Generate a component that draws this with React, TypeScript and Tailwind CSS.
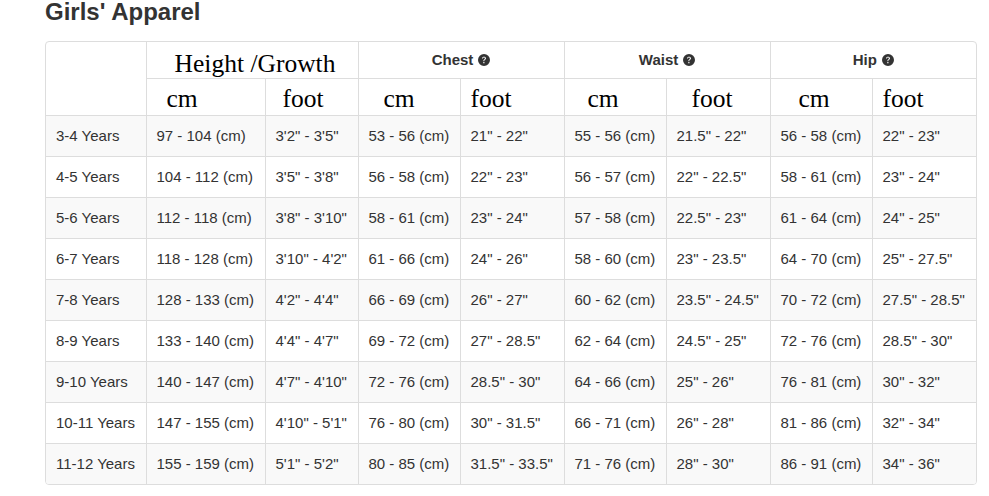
import React from "react";
import { BsQuestionCircleFill } from "react-icons/bs";

const rows: string[][] = [
  ["3-4 Years", "97 - 104 (cm)", "3'2\" - 3'5\"", "53 - 56 (cm)", "21\" - 22\"", "55 - 56 (cm)", "21.5\" - 22\"", "56 - 58 (cm)", "22\" - 23\""],
  ["4-5 Years", "104 - 112 (cm)", "3'5\" - 3'8\"", "56 - 58 (cm)", "22\" - 23\"", "56 - 57 (cm)", "22\" - 22.5\"", "58 - 61 (cm)", "23\" - 24\""],
  ["5-6 Years", "112 - 118 (cm)", "3'8\" - 3'10\"", "58 - 61 (cm)", "23\" - 24\"", "57 - 58 (cm)", "22.5\" - 23\"", "61 - 64 (cm)", "24\" - 25\""],
  ["6-7 Years", "118 - 128 (cm)", "3'10\" - 4'2\"", "61 - 66 (cm)", "24\" - 26\"", "58 - 60 (cm)", "23\" - 23.5\"", "64 - 70 (cm)", "25\" - 27.5\""],
  ["7-8 Years", "128 - 133 (cm)", "4'2\" - 4'4\"", "66 - 69 (cm)", "26\" - 27\"", "60 - 62 (cm)", "23.5\" - 24.5\"", "70 - 72 (cm)", "27.5\" - 28.5\""],
  ["8-9 Years", "133 - 140 (cm)", "4'4\" - 4'7\"", "69 - 72 (cm)", "27\" - 28.5\"", "62 - 64 (cm)", "24.5\" - 25\"", "72 - 76 (cm)", "28.5\" - 30\""],
  ["9-10 Years", "140 - 147 (cm)", "4'7\" - 4'10\"", "72 - 76 (cm)", "28.5\" - 30\"", "64 - 66 (cm)", "25\" - 26\"", "76 - 81 (cm)", "30\" - 32\""],
  ["10-11 Years", "147 - 155 (cm)", "4'10\" - 5'1\"", "76 - 80 (cm)", "30\" - 31.5\"", "66 - 71 (cm)", "26\" - 28\"", "81 - 86 (cm)", "32\" - 34\""],
  ["11-12 Years", "155 - 159 (cm)", "5'1\" - 5'2\"", "80 - 85 (cm)", "31.5\" - 33.5\"", "71 - 76 (cm)", "28\" - 30\"", "86 - 91 (cm)", "34\" - 36\""],
];

const widths = [100, 119, 93, 102, 104, 102, 104, 102, 104];

function GroupHead({ label }: { label: string }) {
  return (
    <th
      colSpan={2}
      className="border border-[#ddd] h-[36px] p-0 text-center align-middle text-[15px] font-bold text-[#333]"
    >
      <span className="inline-flex items-center gap-[5px]">
        {label}
        <BsQuestionCircleFill className="w-[12px] h-[12px] text-[#333]" />
      </span>
    </th>
  );
}

function Unit({ label, pad }: { label: string; pad: string }) {
  return (
    <th
      className={`border border-[#ddd] h-[37px] p-0 text-left align-bottom font-normal text-[25.5px] leading-[32px] text-black ${pad}`}
      style={{ fontFamily: '"Liberation Serif", "Times New Roman", serif' }}
    >
      {label}
    </th>
  );
}

export default function App() {
  return (
    <div
      className="w-[989px] h-[496px] bg-white pl-[45px] overflow-hidden"
      style={{ fontFamily: '"Liberation Sans", Arial, Helvetica, sans-serif' }}
    >
      <h3 className="text-[24px] font-bold leading-[24px] text-[#333] h-[41px]">
        Girls' Apparel
      </h3>
      <div className="w-[932px] border border-[#ddd] rounded-[4px] overflow-hidden">
        <table className="w-[930px] table-fixed border-collapse border-hidden text-[15px] text-[#333]">
          <colgroup>
            {widths.map((w, i) => (
              <col key={i} style={{ width: w }} />
            ))}
          </colgroup>
          <thead>
            <tr>
              <th rowSpan={2} className="border border-[#ddd] p-0"></th>
              <th
                colSpan={2}
                className="border border-[#ddd] h-[36px] p-0 pl-[6px] text-center align-bottom font-normal text-[25.5px] leading-[29px] text-black"
                style={{ fontFamily: '"Liberation Serif", "Times New Roman", serif' }}
              >
                Height /Growth
              </th>
              <GroupHead label="Chest" />
              <GroupHead label="Waist" />
              <GroupHead label="Hip" />
            </tr>
            <tr>
              <Unit label="cm" pad="pl-[20px]" />
              <Unit label="foot" pad="pl-[17px]" />
              <Unit label="cm" pad="pl-[25px]" />
              <Unit label="foot" pad="pl-[10px]" />
              <Unit label="cm" pad="pl-[23px]" />
              <Unit label="foot" pad="pl-[25px]" />
              <Unit label="cm" pad="pl-[28px]" />
              <Unit label="foot" pad="pl-[10px]" />
            </tr>
          </thead>
          <tbody>
            {rows.map((r, i) => (
              <tr key={i} className={i % 2 === 0 ? "bg-[#f9f9f9]" : "bg-white"}>
                {r.map((c, j) => (
                  <td
                    key={j}
                    className="border border-[#ddd] h-[41px] py-0 pl-[10px] pr-0 align-middle whitespace-nowrap leading-[20px]"
                  >
                    {c}
                  </td>
                ))}
              </tr>
            ))}
          </tbody>
        </table>
      </div>
    </div>
  );
}
